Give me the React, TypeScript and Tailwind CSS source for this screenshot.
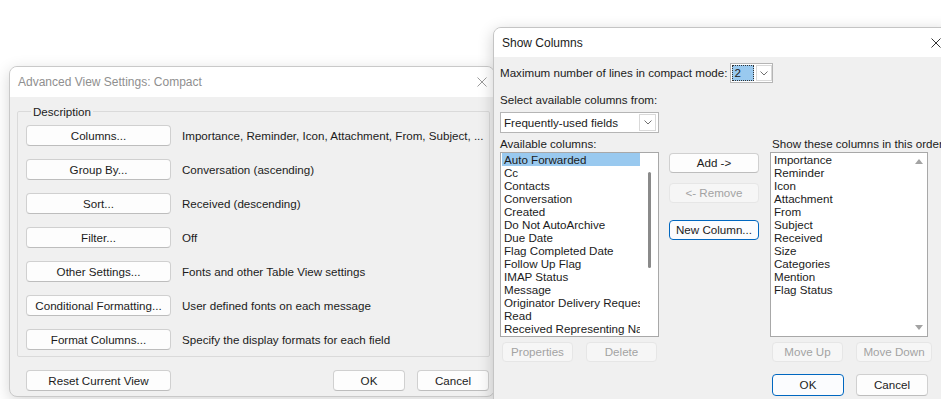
import clsx from "clsx";
import { twMerge } from "tailwind-merge";

const font = "font-['Liberation_Sans',Arial,sans-serif]";

function CloseX({ className = "" }: { className?: string }) {
  return (
    <svg width="10" height="10" viewBox="0 0 10 10" className={className}>
      <path d="M0.5 0.5 L9.5 9.5 M9.5 0.5 L0.5 9.5" stroke="currentColor" strokeWidth="1" fill="none" />
    </svg>
  );
}

function Chevron() {
  return (
    <svg width="8" height="5" viewBox="0 0 8 5">
      <path d="M0.5 0.5 L4 4 L7.5 0.5" stroke="#707070" strokeWidth="1" fill="none" />
    </svg>
  );
}

function Btn({
  children,
  className = "",
  disabled = false,
  primary = false,
}: {
  children: React.ReactNode;
  className?: string;
  disabled?: boolean;
  primary?: boolean;
}) {
  return (
    <div
      className={twMerge(
        clsx(
          "flex h-[21px] shrink-0 items-center justify-center whitespace-nowrap rounded-[4px] border text-[11.6px]",
          disabled
            ? "border-[#e6e6e6] bg-[#f6f6f6] text-[#a3a3a3]"
            : primary
            ? "border-[#0067c0] bg-[#fbfcfe] text-[#1b1b1b]"
            : "border-[#d0d0d0] border-b-[#bdbdbd] bg-[#fdfdfd] text-[#1b1b1b]",
          className
        )
      )}
    >
      {children}
    </div>
  );
}

const rows = [
  ["Columns...", "Importance, Reminder, Icon, Attachment, From, Subject, ..."],
  ["Group By...", "Conversation (ascending)"],
  ["Sort...", "Received (descending)"],
  ["Filter...", "Off"],
  ["Other Settings...", "Fonts and other Table View settings"],
  ["Conditional Formatting...", "User defined fonts on each message"],
  ["Format Columns...", "Specify the display formats for each field"],
];

const available = [
  "Auto Forwarded",
  "Cc",
  "Contacts",
  "Conversation",
  "Created",
  "Do Not AutoArchive",
  "Due Date",
  "Flag Completed Date",
  "Follow Up Flag",
  "IMAP Status",
  "Message",
  "Originator Delivery Requested",
  "Read",
  "Received Representing Name",
];

const shown = [
  "Importance",
  "Reminder",
  "Icon",
  "Attachment",
  "From",
  "Subject",
  "Received",
  "Size",
  "Categories",
  "Mention",
  "Flag Status",
];

function AdvancedView() {
  return (
    <div className="absolute left-[9px] top-[66px] h-[331px] w-[486px] overflow-hidden rounded-[8px] border border-[#c9c9c9] bg-[#f0f0f0] shadow-[0_4px_16px_rgba(0,0,0,0.16)]">
      <div className="flex h-[30px] items-center justify-between bg-white pl-[8px] pr-[7px]">
        <span className="text-[12px] text-[#8f8f8f]">Advanced View Settings: Compact</span>
        <CloseX className="text-[#9a9a9a]" />
      </div>
      <div className="pl-[7px] pt-[7px]">
        <fieldset className="w-[473px] rounded-[2px] border border-[#dadada] pb-[6px] pl-[8px]">
          <legend className="ml-[5px] px-[2px] text-[11.6px] leading-[15px] text-[#1b1b1b]">Description</legend>
          <div className="flex flex-col gap-[13px] pt-[6px]">
            {rows.map(([b, d]) => (
              <div key={b} className="flex items-center gap-[11px]">
                <Btn className="w-[145px]">{b}</Btn>
                <span className="whitespace-nowrap text-[11.6px] text-[#1b1b1b]">{d}</span>
              </div>
            ))}
          </div>
        </fieldset>
        <div className="mt-[13px] flex items-center pl-[9px] pr-[5px]">
          <Btn className="w-[145px]">Reset Current View</Btn>
          <div className="flex-1" />
          <div className="flex gap-[12px]">
            <Btn className="w-[72px]">OK</Btn>
            <Btn className="w-[72px]">Cancel</Btn>
          </div>
        </div>
      </div>
    </div>
  );
}

function ShowColumns() {
  return (
    <div className="absolute left-[493px] top-[27px] h-[400px] w-[460px] overflow-hidden rounded-[8px] border border-[#c4c4c4] bg-[#f0f0f0] shadow-[0_4px_16px_rgba(0,0,0,0.2)]">
      <div className="flex h-[29px] items-center justify-between bg-white pl-[8px] pr-[11px]">
        <span className="text-[12px] text-[#1b1b1b]">Show Columns</span>
        <CloseX className="text-[#333]" />
      </div>
      <div className="pl-[6px] pt-[6px] text-[11.6px] text-[#1b1b1b]">
        <div className="flex h-[20px] items-center gap-[3px]">
          <span className="whitespace-nowrap">Maximum number of lines in compact mode:</span>
          <div className="flex h-[20px] w-[43px] items-center border border-[#b5b5b5] bg-white">
            <div className="ml-[1px] flex h-[16px] w-[22px] items-center border border-dotted border-[#333] bg-[#99c9ef] pl-[1px] leading-none">
              2
            </div>
            <div className="ml-[2px] flex h-[16px] w-[17px] items-center justify-center border border-[#d9d9d9] bg-white">
              <Chevron />
            </div>
          </div>
        </div>
        <div className="mt-[9px] leading-[15px]">Select available columns from:</div>
        <div className="mt-[5px] flex h-[21px] w-[159px] items-center justify-between border border-[#b5b5b5] bg-white pl-[3px] pr-[2px]">
          <span>Frequently-used fields</span>
          <div className="flex h-[17px] w-[17px] items-center justify-center border border-[#d9d9d9] bg-white">
            <Chevron />
          </div>
        </div>
        <div className="mt-[3px] flex">
          {/* available */}
          <div className="flex w-[159px] flex-col">
            <div className="h-[16px] leading-[15px]">Available columns:</div>
            <div className="flex h-[185px] border border-[#a8a8a8] bg-white">
              <div className="flex w-[139px] flex-col overflow-hidden pl-[1px]">
                {available.map((a, i) => (
                  <div
                    key={a}
                    className={clsx(
                      "h-[13px] shrink-0 whitespace-nowrap pl-[2px] leading-[13px]",
                      i === 0 && "bg-[#99c9ef]"
                    )}
                  >
                    {a}
                  </div>
                ))}
              </div>
              <div className="flex flex-1 justify-center">
                <div className="mt-[19px] h-[96px] w-[3px] rounded-full bg-[#8a8a8a]" />
              </div>
            </div>
            <div className="mt-[5px] flex gap-[13px] pl-[2px]">
              <Btn disabled className="h-[20px] w-[71px]">Properties</Btn>
              <Btn disabled className="h-[20px] w-[71px]">Delete</Btn>
            </div>
          </div>
          {/* middle */}
          <div className="ml-[10px] flex w-[90px] flex-col pt-[17px]">
            <Btn className="h-[20px]">{"Add ->"}</Btn>
            <Btn disabled className="mt-[10px] h-[20px]">{"<- Remove"}</Btn>
            <Btn primary className="mt-[17px] h-[20px]">New Column...</Btn>
          </div>
          {/* shown */}
          <div className="ml-[11px] flex w-[158px] flex-col">
            <div className="h-[16px] whitespace-nowrap pl-[2px] leading-[15px]">Show these columns in this order:</div>
            <div className="flex h-[185px] border border-[#a8a8a8] bg-white">
              <div className="flex flex-1 flex-col overflow-hidden pl-[3px]">
                {shown.map((s) => (
                  <div key={s} className="h-[13px] shrink-0 whitespace-nowrap leading-[13px]">
                    {s}
                  </div>
                ))}
              </div>
              <div className="flex w-[17px] flex-col items-center justify-between py-[6px]">
                <svg width="8" height="5" viewBox="0 0 8 5">
                  <path d="M0 5 L4 0 L8 5 Z" fill="#a3a3a3" />
                </svg>
                <svg width="8" height="5" viewBox="0 0 8 5">
                  <path d="M0 0 L4 5 L8 0 Z" fill="#a3a3a3" />
                </svg>
              </div>
            </div>
            <div className="mt-[5px] flex gap-[13px] pl-[2px]">
              <Btn disabled className="h-[20px] w-[71px]">Move Up</Btn>
              <Btn disabled className="h-[20px] w-[76px]">Move Down</Btn>
            </div>
            <div className="mt-[12px] flex gap-[12px] pl-[2px]">
              <Btn primary className="h-[22px] w-[72px]">OK</Btn>
              <Btn className="h-[22px] w-[72px]">Cancel</Btn>
            </div>
          </div>
        </div>
      </div>
    </div>
  );
}

export default function App() {
  return (
    <div className={clsx("relative h-[399px] w-[941px] overflow-hidden bg-white", font)}>
      <AdvancedView />
      <ShowColumns />
    </div>
  );
}
